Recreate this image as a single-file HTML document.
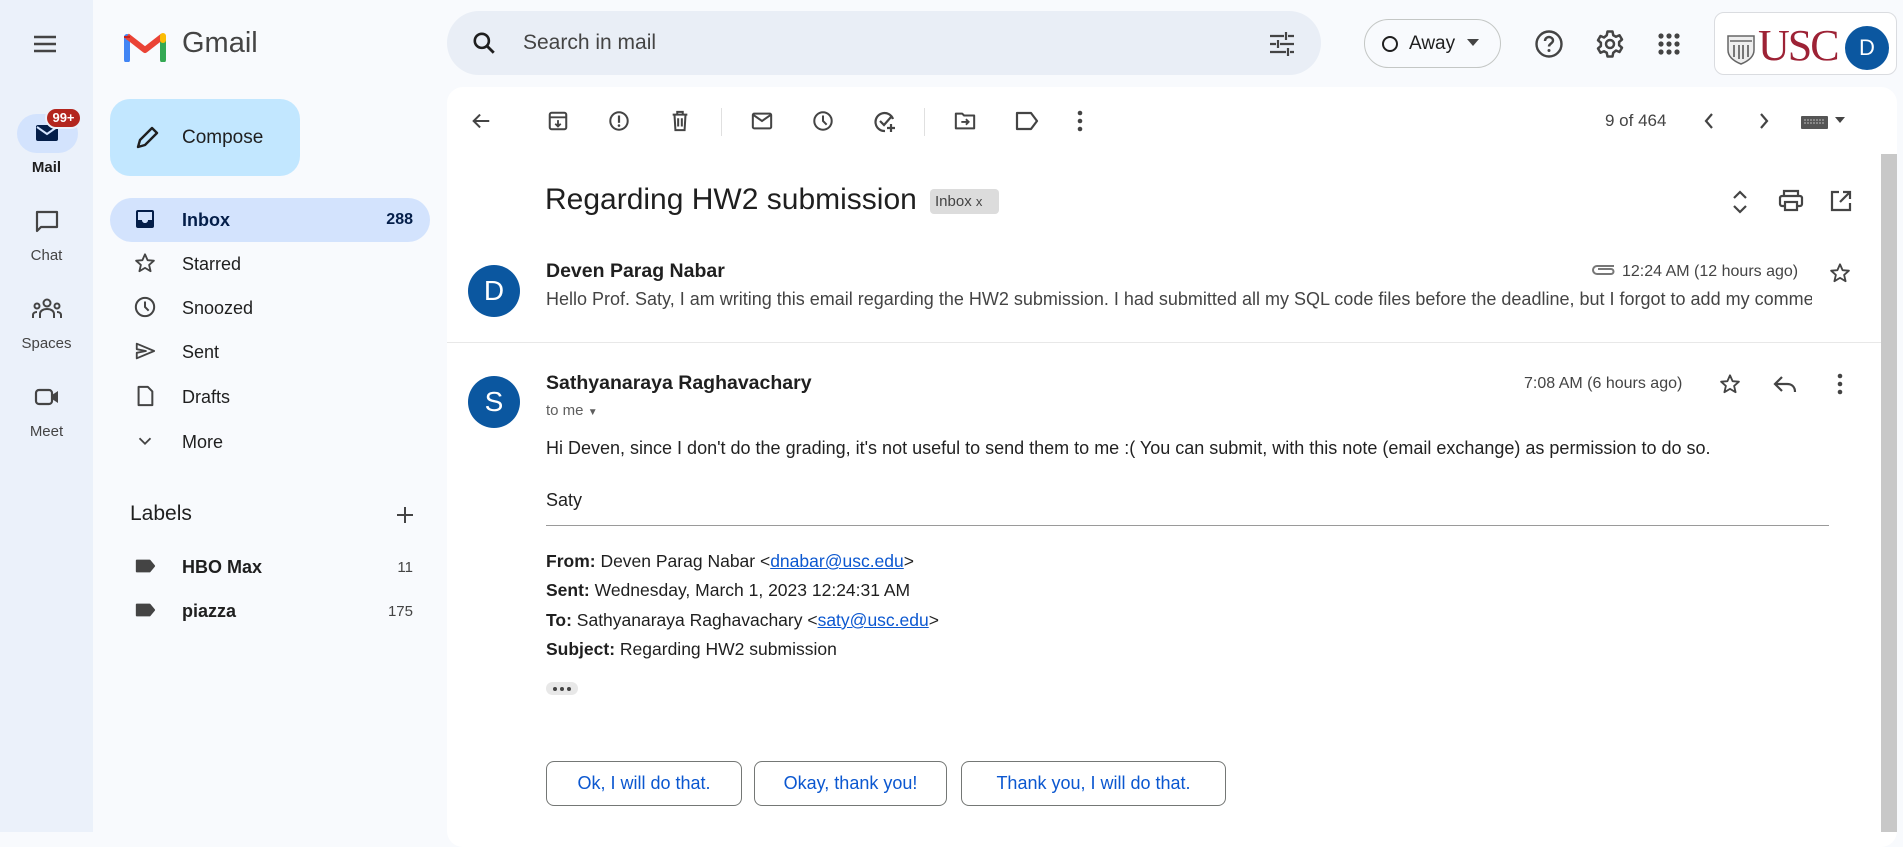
<!DOCTYPE html>
<html><head><meta charset="utf-8"><style>
*{box-sizing:border-box;margin:0;padding:0}
body{width:1903px;height:832px;overflow:hidden;background:#f8fafd;font-family:"Liberation Sans",Arial,sans-serif;color:#1f1f1f;position:relative}
.a{position:absolute}
svg{display:block}
.rail{left:0;top:0;width:93px;height:832px;background:#ebf1fa}
.rl{width:93px;text-align:center;font-size:15px;color:#444}
.nav{left:110px;width:320px;height:44px;border-radius:22px;font-size:18px;color:#1f1f1f}
.nav span.t{position:absolute;left:72px;top:12px}
.nav svg{position:absolute;left:24px;top:10px}
.main{left:447px;top:87px;width:1450px;height:760px;background:#fff;border-radius:16px}
.ic{position:absolute}
.btn{top:761px;height:45px;border:1px solid #747775;border-radius:8px;color:#0b57d0;font-size:18px;line-height:43px;text-align:center}
.hdr{font-size:17.5px;color:#1f1f1f}
</style></head><body>
<div class="a rail"></div>
<svg class="a" style="left:32px;top:32px" width="26" height="24" viewBox="0 0 26 24"><path d="M2 5h22M2 12h22M2 19h22" stroke="#444" stroke-width="2.4"/></svg>
<svg class="a" style="left:124px;top:30px" width="42" height="32" viewBox="0 0 42 32"><path d="M3 30V7" stroke="#4285f4" stroke-width="6" stroke-linecap="round"/><path d="M39 30V7" stroke="#34a853" stroke-width="6" stroke-linecap="round"/><path d="M3 6l18 14 18-14" fill="none" stroke="#ea4335" stroke-width="6" stroke-linejoin="round"/><path d="M3 6l0 2" stroke="#c5221f" stroke-width="6"/><path d="M39 6l0 4" stroke="#fbbc04" stroke-width="6" stroke-linecap="round"/></svg>
<div class="a" style="left:182px;top:27px;font-size:29px;color:#444">Gmail</div>
<div class="a" style="left:17px;top:114px;width:61px;height:39px;border-radius:20px;background:#d3e3fd"></div>
<svg class="a" style="left:35px;top:123px" width="24" height="20" viewBox="0 0 24 20"><rect x="1" y="2" width="22" height="16" rx="2" fill="#041e49"/><path d="M2 4l10 7 10-7" fill="none" stroke="#d3e3fd" stroke-width="2"/></svg>
<div class="a" style="left:45px;top:107px;width:37px;height:22px;border-radius:11px;background:#b3261e;border:2px solid #ebf1fa;color:#fff;font-size:13px;font-weight:bold;text-align:center;line-height:18px">99+</div>
<div class="a rl" style="top:159px;color:#1f1f1f;font-weight:bold;font-size:15px">Mail</div>
<svg class="a" style="left:34px;top:209px" width="26" height="26" viewBox="0 0 26 26"><path d="M3 3h20v15H7l-4 4z" fill="none" stroke="#444" stroke-width="2.2" stroke-linejoin="round"/></svg>
<div class="a rl" style="top:247px">Chat</div>
<svg class="a" style="left:32px;top:298px" width="30" height="22" viewBox="0 0 30 22"><circle cx="15" cy="5" r="3.5" fill="none" stroke="#444" stroke-width="2"/><circle cx="5" cy="8" r="2.5" fill="none" stroke="#444" stroke-width="2"/><circle cx="25" cy="8" r="2.5" fill="none" stroke="#444" stroke-width="2"/><path d="M8 20v-4c0-3 3-5 7-5s7 2 7 5v4M1 20v-3c0-2 2-3 4-3M29 20v-3c0-2-2-3-4-3" fill="none" stroke="#444" stroke-width="2"/></svg>
<div class="a rl" style="top:335px">Spaces</div>
<svg class="a" style="left:34px;top:387px" width="26" height="20" viewBox="0 0 26 20"><rect x="2" y="3" width="16" height="14" rx="3" fill="none" stroke="#444" stroke-width="2.2"/><path d="M18 8l6-4v12l-6-4z" fill="#444"/></svg>
<div class="a rl" style="top:423px">Meet</div>
<div class="a" style="left:110px;top:99px;width:190px;height:77px;border-radius:20px;background:#c2e7ff"></div>
<svg class="a" style="left:133px;top:124px" width="28" height="28" viewBox="0 0 28 28"><path d="M5 23l2-7L19 4l5 5L12 21z" fill="none" stroke="#1f1f1f" stroke-width="2.4" stroke-linejoin="round"/></svg>
<div class="a" style="left:182px;top:127px;font-size:19px;color:#1f1f1f">Compose</div>
<div class="a nav" style="top:198px;background:#d3e3fd;font-weight:bold"><svg width="22" height="22" viewBox="0 0 22 22"><rect x="2" y="2" width="18" height="18" rx="2" fill="#041e49"/><path d="M4 4h14v8h-4c0 2-1.5 3-3 3s-3-1-3-3H4z" fill="#d3e3fd"/></svg><span class="t" style="color:#041e49">Inbox</span><span class="a" style="right:17px;top:13px;font-size:16px;color:#041e49">288</span></div>
<div class="a nav" style="top:242px"><svg width="22" height="22" viewBox="0 0 24 24"><path d="M12 2.5l2.8 6.4 6.9.6-5.2 4.6 1.6 6.8L12 17.3 5.9 20.9l1.6-6.8L2.3 9.5l6.9-.6z" fill="none" stroke="#444" stroke-width="2" stroke-linejoin="round"/></svg><span class="t">Starred</span></div>
<div class="a nav" style="top:286px"><svg width="22" height="22" viewBox="0 0 24 24"><circle cx="12" cy="12" r="10" fill="none" stroke="#444" stroke-width="2.2"/><path d="M12 6v6l4 4" fill="none" stroke="#444" stroke-width="2.2"/></svg><span class="t">Snoozed</span></div>
<div class="a nav" style="top:330px"><svg width="22" height="22" viewBox="0 0 24 24"><path d="M3 4l19 8-19 8v-6l10-2-10-2z" fill="none" stroke="#444" stroke-width="2" stroke-linejoin="round"/></svg><span class="t">Sent</span></div>
<div class="a nav" style="top:375px"><svg width="22" height="22" viewBox="0 0 24 24"><path d="M5 2h10l5 5v15H5z" fill="none" stroke="#444" stroke-width="2.2" stroke-linejoin="round"/></svg><span class="t">Drafts</span></div>
<div class="a nav" style="top:420px"><svg width="22" height="22" viewBox="0 0 24 24"><path d="M6 9l6 6 6-6" fill="none" stroke="#444" stroke-width="2"/></svg><span class="t">More</span></div>
<div class="a" style="left:130px;top:502px;font-size:21px;color:#1f1f1f">Labels</div>
<svg class="a" style="left:395px;top:505px" width="20" height="20" viewBox="0 0 20 20"><path d="M10 2v16M2 10h16" stroke="#444" stroke-width="2"/></svg>
<div class="a nav" style="top:545px;font-weight:bold"><svg width="22" height="22" viewBox="0 0 24 24"><path d="M3 6h14l5 6-5 6H3z" fill="#444" stroke="#444" stroke-linejoin="round" stroke-width="2"/></svg><span class="t">HBO Max</span><span class="a" style="right:17px;top:14px;font-size:15px;font-weight:normal;color:#444">11</span></div>
<div class="a nav" style="top:589px;font-weight:bold"><svg width="22" height="22" viewBox="0 0 24 24"><path d="M3 6h14l5 6-5 6H3z" fill="#444" stroke="#444" stroke-linejoin="round" stroke-width="2"/></svg><span class="t">piazza</span><span class="a" style="right:17px;top:14px;font-size:15px;font-weight:normal;color:#444">175</span></div>
<div class="a" style="left:447px;top:11px;width:874px;height:64px;border-radius:32px;background:#e9eef6"></div>
<svg class="a" style="left:471px;top:30px" width="26" height="26" viewBox="0 0 24 24"><circle cx="10" cy="10" r="6.5" fill="none" stroke="#1f1f1f" stroke-width="2.4"/><path d="M15 15l6 6" stroke="#1f1f1f" stroke-width="2.6"/></svg>
<div class="a" style="left:523px;top:31px;font-size:21px;color:#444">Search in mail</div>
<svg class="a" style="left:1268px;top:31px" width="28" height="26" viewBox="0 0 28 26"><path d="M2 5h14M20 5h6M2 13h6M12 13h14M2 21h16M22 21h4M18 1v8M10 9v8M20 17v8" stroke="#444" stroke-width="2.2"/></svg>
<div class="a" style="left:1364px;top:19px;width:137px;height:49px;border-radius:25px;border:1px solid #c4c7c5"></div>
<div class="a" style="left:1382px;top:36px;width:16px;height:16px;border-radius:50%;border:2px solid #1f1f1f"></div>
<div class="a" style="left:1409px;top:33px;font-size:19px;color:#1f1f1f">Away</div>
<svg class="a" style="left:1467px;top:39px" width="12" height="8"><path d="M0 0h12L6 7z" fill="#444"/></svg>
<svg class="a" style="left:1534px;top:29px" width="30" height="30" viewBox="0 0 30 30"><circle cx="15" cy="15" r="12.5" fill="none" stroke="#444" stroke-width="2.4"/><path d="M11 12c0-2.5 2-4 4-4s4 1.5 4 3.5c0 3-4 3-4 6" fill="none" stroke="#444" stroke-width="2.4"/><circle cx="15" cy="21.5" r="1.5" fill="#444"/></svg>
<svg class="a" style="left:1595px;top:29px" width="30" height="30" viewBox="0 0 24 24"><path d="M10 2h4l.6 3 2.2 1.2 2.8-1.2 2 3.4-2.3 2v2.6l2.3 2-2 3.4-2.8-1.2L14.6 19 14 22h-4l-.6-3-2.2-1.2-2.8 1.2-2-3.4 2.3-2v-2.6l-2.3-2 2-3.4 2.8 1.2L9.4 5z" fill="none" stroke="#444" stroke-width="2" stroke-linejoin="round"/><circle cx="12" cy="12" r="3.2" fill="none" stroke="#444" stroke-width="2"/></svg>
<svg class="a" style="left:1657px;top:32px" width="24" height="24" viewBox="0 0 24 24"><g fill="#444"><circle cx="4" cy="4" r="2.6"/><circle cx="12" cy="4" r="2.6"/><circle cx="20" cy="4" r="2.6"/><circle cx="4" cy="12" r="2.6"/><circle cx="12" cy="12" r="2.6"/><circle cx="20" cy="12" r="2.6"/><circle cx="4" cy="20" r="2.6"/><circle cx="12" cy="20" r="2.6"/><circle cx="20" cy="20" r="2.6"/></g></svg>
<div class="a" style="left:1714px;top:12px;width:183px;height:63px;border-radius:10px;background:#fff;border:1px solid #dadce0"></div>
<svg class="a" style="left:1726px;top:33px" width="30" height="32" viewBox="0 0 30 32"><path d="M2 3h26v14c0 8-8 12-13 14C10 29 2 25 2 17z" fill="#eee" stroke="#666" stroke-width="1.5"/><path d="M8 12v12M13 12v14M17 12v14M22 12v12" stroke="#777" stroke-width="2"/><path d="M4 8h22" stroke="#888" stroke-width="2"/></svg>
<div class="a" style="left:1758px;top:24px;font-family:'Liberation Serif',serif;font-size:44px;color:#9d2235;letter-spacing:-2px;line-height:44px">USC</div>
<div class="a" style="left:1845px;top:26px;width:44px;height:44px;border-radius:50%;background:#0b57a0;color:#fff;font-size:22px;text-align:center;line-height:44px">D</div>
<div class="a main"></div>
<div class="a" style="left:1881px;top:154px;width:16px;height:678px;background:#c8c8c8"></div>
<svg class="ic" style="left:470px;top:110px" width="22" height="22" viewBox="0 0 24 24"><path d="M21 12H4M11 5l-7 7 7 7" fill="none" stroke="#444" stroke-width="2.2"/></svg>
<svg class="ic" style="left:547px;top:110px" width="22" height="22" viewBox="0 0 24 24"><rect x="3" y="3" width="18" height="18" rx="2" fill="none" stroke="#444" stroke-width="2.2"/><path d="M3 8h18M12 11v7M9 15l3 3 3-3" fill="none" stroke="#444" stroke-width="2"/></svg>
<svg class="ic" style="left:608px;top:110px" width="22" height="22" viewBox="0 0 24 24"><circle cx="12" cy="12" r="9.5" fill="none" stroke="#444" stroke-width="2.2"/><path d="M12 6v8" stroke="#444" stroke-width="2.4"/><circle cx="12" cy="17" r="1.4" fill="#444"/></svg>
<svg class="ic" style="left:669px;top:110px" width="22" height="22" viewBox="0 0 24 24"><path d="M4 5h16M9 5V2h6v3M6 5l1 17h10l1-17M10 9v9M14 9v9" fill="none" stroke="#444" stroke-width="2.2"/></svg>
<div class="a" style="left:721px;top:108px;width:1px;height:28px;background:#e0e0e0"></div>
<svg class="ic" style="left:751px;top:110px" width="22" height="22" viewBox="0 0 24 24"><rect x="2" y="4" width="20" height="16" rx="1.5" fill="none" stroke="#444" stroke-width="2.2"/><path d="M2 5l10 7 10-7" fill="none" stroke="#444" stroke-width="2.2"/></svg>
<svg class="ic" style="left:812px;top:110px" width="22" height="22" viewBox="0 0 24 24"><circle cx="12" cy="12" r="9.5" fill="none" stroke="#444" stroke-width="2.2"/><path d="M12 6v6l4 4" fill="none" stroke="#444" stroke-width="2.2"/></svg>
<svg class="ic" style="left:873px;top:110px" width="24" height="24" viewBox="0 0 24 24"><path d="M20 9a9 9 0 1 0-8 12" fill="none" stroke="#444" stroke-width="2.2"/><path d="M7 11l4 4 7-8M18 14v8M14 18h8" fill="none" stroke="#444" stroke-width="2.2"/></svg>
<div class="a" style="left:924px;top:108px;width:1px;height:28px;background:#e0e0e0"></div>
<svg class="ic" style="left:954px;top:110px" width="22" height="22" viewBox="0 0 24 24"><path d="M2 4h7l2 2h11v14H2z" fill="none" stroke="#444" stroke-width="2.2" stroke-linejoin="round"/><path d="M8 13h8M13 10l3 3-3 3" fill="none" stroke="#444" stroke-width="2"/></svg>
<svg class="ic" style="left:1015px;top:110px" width="24" height="22" viewBox="0 0 24 22"><path d="M2 3h14l6 8-6 8H2z" fill="none" stroke="#444" stroke-width="2.2" stroke-linejoin="round"/></svg>
<svg class="ic" style="left:1076px;top:110px" width="8" height="22" viewBox="0 0 8 22"><g fill="#444"><circle cx="4" cy="3" r="2.3"/><circle cx="4" cy="11" r="2.3"/><circle cx="4" cy="19" r="2.3"/></g></svg>
<div class="a" style="left:1605px;top:111px;font-size:17px;color:#444">9 of 464</div>
<svg class="ic" style="left:1702px;top:111px" width="14" height="20" viewBox="0 0 14 20"><path d="M10 3l-6 7 6 7" fill="none" stroke="#444" stroke-width="2.2"/></svg>
<svg class="ic" style="left:1757px;top:111px" width="14" height="20" viewBox="0 0 14 20"><path d="M4 3l6 7-6 7" fill="none" stroke="#444" stroke-width="2.2"/></svg>
<svg class="ic" style="left:1801px;top:114px" width="46" height="16" viewBox="0 0 46 16"><rect x="0" y="2" width="27" height="13" rx="1" fill="#555"/><path d="M3 6h21M3 9h21" stroke="#bbb" stroke-width="1" stroke-dasharray="2 1"/><path d="M34 3h10l-5 6z" fill="#444"/></svg>
<div class="a" style="left:545px;top:183px;font-size:30px;color:#1f1f1f">Regarding HW2 submission</div>
<div class="a" style="left:930px;top:189px;width:69px;height:25px;border-radius:4px;background:#dcdcdc;font-size:15px;color:#444;line-height:25px;padding-left:5px">Inbox <span style="font-size:13px">x</span></div>
<svg class="ic" style="left:1730px;top:188px" width="20" height="28" viewBox="0 0 20 28"><path d="M4 10l6-6 6 6M4 18l6 6 6-6" fill="none" stroke="#444" stroke-width="2.2"/></svg>
<svg class="ic" style="left:1778px;top:189px" width="26" height="24" viewBox="0 0 26 24"><path d="M6 7V2h14v5" fill="none" stroke="#444" stroke-width="2.2"/><rect x="2" y="7" width="22" height="10" rx="2" fill="none" stroke="#444" stroke-width="2.2"/><rect x="7" y="13" width="12" height="8" fill="#fff" stroke="#444" stroke-width="2.2"/></svg>
<svg class="ic" style="left:1829px;top:189px" width="24" height="24" viewBox="0 0 24 24"><path d="M10 3H3v18h18v-7M14 3h7v7M21 3L11 13" fill="none" stroke="#444" stroke-width="2.2"/></svg>
<div class="a" style="left:468px;top:265px;width:52px;height:52px;border-radius:50%;background:#0b57a0;color:#fff;font-size:28px;text-align:center;line-height:52px">D</div>
<div class="a" style="left:546px;top:260px;font-size:19.5px;font-weight:bold;color:#1f1f1f">Deven Parag Nabar</div>
<div class="a" style="left:546px;top:289px;font-size:18px;color:#444;white-space:nowrap;width:1266px;overflow:hidden">Hello Prof. Saty, I am writing this email regarding the HW2 submission. I had submitted all my SQL code files before the deadline, but I forgot to add my commen</div>
<svg class="ic" style="left:1590px;top:262px" width="26" height="14" viewBox="0 0 26 14"><path d="M24 4H7a4 4 0 0 0 0 8h14a2.5 2.5 0 0 0 0-5H8" fill="none" stroke="#777" stroke-width="2"/></svg>
<div class="a" style="left:1622px;top:263px;font-size:16px;color:#444">12:24 AM (12 hours ago)</div>
<svg class="ic" style="left:1829px;top:262px" width="22" height="22" viewBox="0 0 24 24"><path d="M12 2.5l2.8 6.4 6.9.6-5.2 4.6 1.6 6.8L12 17.3 5.9 20.9l1.6-6.8L2.3 9.5l6.9-.6z" fill="none" stroke="#444" stroke-width="2" stroke-linejoin="round"/></svg>
<div class="a" style="left:447px;top:342px;width:1434px;height:1px;background:#e8e8e8"></div>
<div class="a" style="left:468px;top:376px;width:52px;height:52px;border-radius:50%;background:#0b57a0;color:#fff;font-size:28px;text-align:center;line-height:52px">S</div>
<div class="a" style="left:546px;top:372px;font-size:19.5px;font-weight:bold;color:#1f1f1f">Sathyanaraya Raghavachary</div>
<div class="a" style="left:546px;top:402px;font-size:15px;color:#5e5e5e">to me <span style="font-size:10px">&#9660;</span></div>
<div class="a" style="left:1524px;top:375px;font-size:16px;color:#444">7:08 AM (6 hours ago)</div>
<svg class="ic" style="left:1719px;top:373px" width="22" height="22" viewBox="0 0 24 24"><path d="M12 2.5l2.8 6.4 6.9.6-5.2 4.6 1.6 6.8L12 17.3 5.9 20.9l1.6-6.8L2.3 9.5l6.9-.6z" fill="none" stroke="#444" stroke-width="2" stroke-linejoin="round"/></svg>
<svg class="ic" style="left:1773px;top:374px" width="24" height="20" viewBox="0 0 24 20"><path d="M9 3L2 10l7 7M2 10h12c5 0 8 3 8 8" fill="none" stroke="#444" stroke-width="2.2"/></svg>
<svg class="ic" style="left:1836px;top:373px" width="8" height="22" viewBox="0 0 8 22"><g fill="#444"><circle cx="4" cy="3" r="2.3"/><circle cx="4" cy="11" r="2.3"/><circle cx="4" cy="19" r="2.3"/></g></svg>
<div class="a" style="left:546px;top:438px;font-size:18px;color:#222">Hi Deven, since I don't do the grading, it's not useful to send them to me :( You can submit, with this note (email exchange) as permission to do so.</div>
<div class="a" style="left:546px;top:490px;font-size:18px;color:#222">Saty</div>
<div class="a" style="left:546px;top:525px;width:1283px;height:1px;background:#9a9a9a"></div>
<div class="a hdr" style="left:546px;top:551px"><b>From:</b> Deven Parag Nabar &lt;<span style="color:#0b57d0;text-decoration:underline">dnabar@usc.edu</span>&gt;</div>
<div class="a hdr" style="left:546px;top:580px"><b>Sent:</b> Wednesday, March 1, 2023 12:24:31 AM</div>
<div class="a hdr" style="left:546px;top:610px"><b>To:</b> Sathyanaraya Raghavachary &lt;<span style="color:#0b57d0;text-decoration:underline">saty@usc.edu</span>&gt;</div>
<div class="a hdr" style="left:546px;top:639px"><b>Subject:</b> Regarding HW2 submission</div>
<div class="a" style="left:546px;top:682px;width:32px;height:13px;border-radius:7px;background:#e8e8e8"></div>
<svg class="ic" style="left:551px;top:686px" width="22" height="6"><g fill="#444"><circle cx="4" cy="3" r="2"/><circle cx="11" cy="3" r="2"/><circle cx="18" cy="3" r="2"/></g></svg>
<div class="a btn" style="left:546px;width:196px">Ok, I will do that.</div>
<div class="a btn" style="left:754px;width:193px">Okay, thank you!</div>
<div class="a btn" style="left:961px;width:265px">Thank you, I will do that.</div>
</body></html>
